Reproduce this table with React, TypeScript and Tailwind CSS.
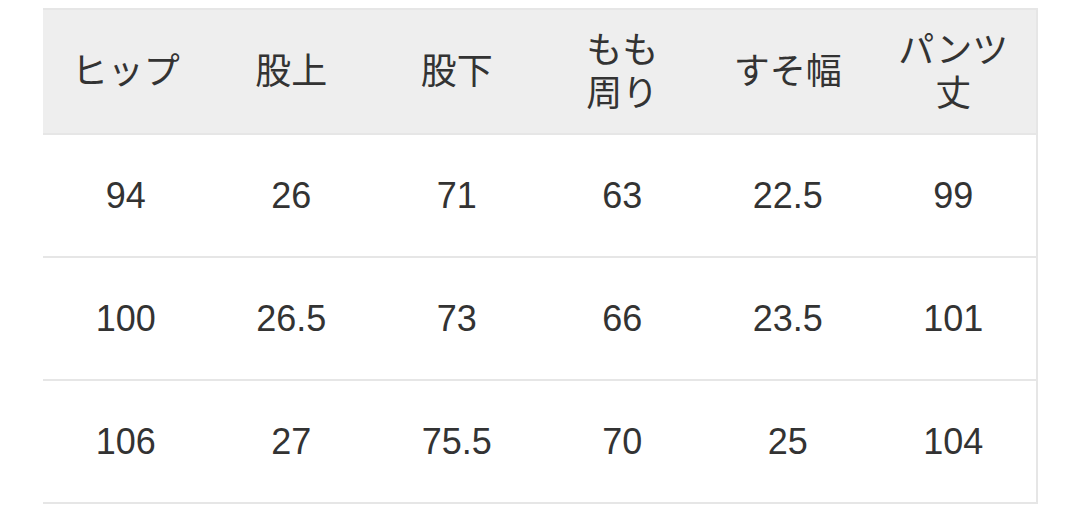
const headers: string[][] = [
  ['ヒップ'],
  ['股上'],
  ['股下'],
  ['もも', '周り'],
  ['すそ幅'],
  ['パンツ', '丈'],
];

const rows: string[][] = [
  ['94', '26', '71', '63', '22.5', '99'],
  ['100', '26.5', '73', '66', '23.5', '101'],
  ['106', '27', '75.5', '70', '25', '104'],
];

export default function App() {
  return (
    <div className="w-[1080px] h-[514px] bg-white pt-[8px] pl-[43px] overflow-hidden">
      <div
        className="w-[995px] border-t-2 border-r-2 border-[#e6e6e6] text-[#333333] text-[36px]"
        style={{ fontFamily: '"Liberation Sans", "Noto Sans CJK JP", sans-serif' }}
      >
        {/* Header */}
        <div className="grid grid-cols-6 h-[125px] bg-[#eeeeee] border-b-2 border-[#e6e6e6]">
          {headers.map((lines, i) => (
            <div key={i} className="flex flex-col items-center justify-center leading-[43px]">
              {lines.map((l) => (
                <span key={l}>{l}</span>
              ))}
            </div>
          ))}
        </div>

        {/* Body */}
        {rows.map((row, r) => (
          <div key={r} className="grid grid-cols-6 h-[123px] border-b-2 border-[#e6e6e6]">
            {row.map((v, i) => (
              <div key={i} className="flex items-center justify-center">
                {v}
              </div>
            ))}
          </div>
        ))}
      </div>
    </div>
  );
}
